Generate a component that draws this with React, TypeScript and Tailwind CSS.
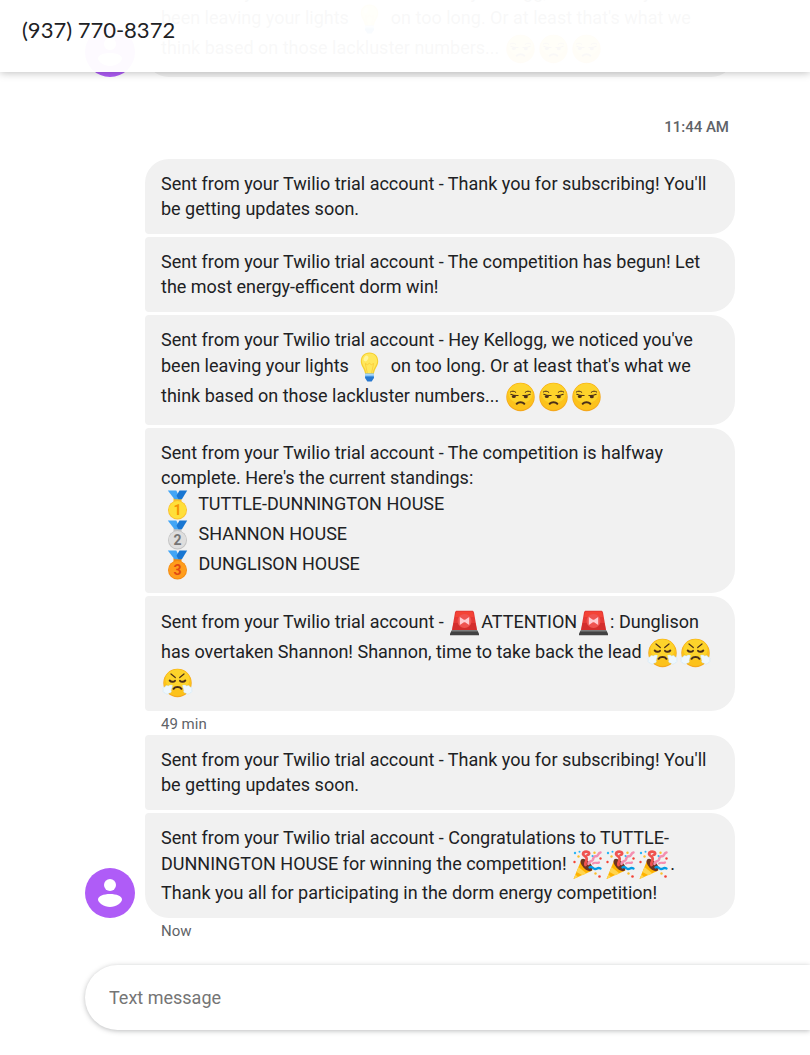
import type { ReactNode } from "react";
import clsx from "clsx";

const Emoji = ({ label, children }: { label: string; children: ReactNode }) => (
  <svg
    role="img"
    aria-label={label}
    viewBox="0 0 30 30"
    className="inline-block h-[30px] w-[33px] align-middle"
  >
    {children}
  </svg>
);

const Bulb = () => (
  <Emoji label="light bulb">
    <path d="M15 .5C9.500.5 6.300 4.400 6.300 9.200c0 4.800 3.600 7.200 4.300 12.500h8.800c.7-5.300 4.300-7.700 4.300-12.500C23.700 4.400 20.500.5 15 .5z" fill="#f6cf2f" />
    <path d="M15 1.500c-4.900 0-7.600 3.400-7.600 7.600 0 4.400 3.700 6.700 4.400 12h6.400c.7-5.300 4.400-7.600 4.400-12 0-4.200-2.700-7.600-7.600-7.600z" fill="#ffe75c" />
    <path d="M12.800 21l-2-9.500 2.100 1.200 2-1.400 2 1.400 2.200-1.200-2 9.500" fill="none" stroke="#f9c937" strokeWidth=".8" />
    <ellipse cx="11.500" cy="6.500" rx="2" ry="3" transform="rotate(30 11.500 6.500)" fill="#fff59d" />
    <path d="M10.600 21.500h8.800v4.200l-1.400 1.600h-6l-1.400-1.600z" fill="#64b5f6" />
    <path d="M10.600 24.500h8.800v1.500l-2.200 3.500h-4.400L10.600 26z" fill="#2878d0" />
    <path d="M10.600 22.800h8.800" stroke="#bbdefb" strokeWidth="1.300" />
  </Emoji>
);

const FaceBase = () => (
  <>
    <circle cx="15" cy="15" r="14.200" fill="#f5a81c" />
    <circle cx="15" cy="14.500" r="13.600" fill="#fcc21b" />
    <ellipse cx="15" cy="11.500" rx="12" ry="10" fill="#fdd32b" />
  </>
);

const Unamused = () => (
  <Emoji label="unamused face">
    <FaceBase />
    <g fill="none" stroke="#4a2e18" strokeLinecap="round">
      <path d="M4.800 10c1.800-1.300 3.800-1.100 5.500.3M19.700 10.300c1.700-1.400 3.700-1.600 5.500-.3" strokeWidth="1" />
      <path d="M5.300 12.300c2.200 1 4.600 1.400 7.300 1.200M17.400 13.500c2.700.2 5.100-.2 7.300-1.200" strokeWidth="1.100" />
      <path d="M11.200 21.800c1.900-2 5.700-2 7.600 0" strokeWidth="2" />
    </g>
    <ellipse cx="8.300" cy="14.500" rx="2" ry="1.600" fill="#4a2e18" />
    <ellipse cx="20.300" cy="14.700" rx="2" ry="1.600" fill="#4a2e18" />
  </Emoji>
);

const Triumph = () => (
  <Emoji label="face with steam from nose">
    <FaceBase />
    <g fill="none" stroke="#4a2e18" strokeLinecap="round">
      <path d="M8.500 6l4.300 3.500M21.500 6l-4.300 3.500" strokeWidth="1.200" />
      <path d="M7.200 12.500c1.500 1.700 4 1.700 5.300.3M22.800 12.500c-1.500 1.700-4 1.700-5.300.3" strokeWidth="1.900" />
      <path d="M11 20.800c1.800-2.300 6.200-2.300 8 0" strokeWidth="2" />
    </g>
    <g fill="#eef7fd" stroke="#c3e0f2" strokeWidth=".4">
      <path d="M10 17.500c-1.700-.8-3.400-.4-4 .6-1.500-1.300-3.300-.6-3.500.8-2 .1-2.500 2-1.600 3-1 1.300 0 3.100 1.700 3 .8 1.700 3.500 1.500 4.100.1 1.700.3 2.800-1.400 1.900-2.700.7-1.400.8-2.900 1.400-4.800z" />
      <path d="M20 17.500c1.700-.8 3.400-.4 4 .6 1.500-1.300 3.300-.6 3.500.8 2 .1 2.500 2 1.600 3 1 1.300 0 3.100-1.700 3-.8 1.700-3.500 1.500-4.100.1-1.700.3-2.800-1.400-1.900-2.700-.7-1.400-.8-2.900-1.400-4.800z" />
    </g>
  </Emoji>
);

type MedalProps = { label: string; place: string; rim: string; fill: string; ink: string };

const Medal = ({ label, place, rim, fill, ink }: MedalProps) => (
  <Emoji label={label}>
    <path d="M11 8h8v5h-8z" fill={rim} />
    <path d="M5.300.5h8.500l4.200 8.700h-6z" fill="#42a5f5" />
    <path d="M17 .5h7.700l-5.300 8.700h-3.400l-2-3.500z" fill="#1976d2" />
    <circle cx="15" cy="20" r="9.500" fill={rim} />
    <circle cx="15" cy="19.800" r="8.700" fill={fill} />
    <text
      x="15"
      y="25"
      textAnchor="middle"
      fill={ink}
      className="font-[Roboto,sans-serif] text-[14px] font-bold"
    >
      {place}
    </text>
  </Emoji>
);

const Siren = () => (
  <Emoji label="police car light">
    <path d="M5.500 4.500C5.700 3.300 6.500 2.800 7.500 2.800h15c1 0 1.800.5 2 1.700L27.500 22h-25z" fill="#e53935" />
    <path d="M6.500 5c.1-1 .6-1.300 1.300-1.300h14.400c.7 0 1.200.3 1.300 1.300l.8 4H5.800z" fill="#f44336" />
    <path d="M4 15l-1.500 7h25L26 15z" fill="#c62828" opacity=".6" />
    <circle cx="15" cy="13" r="7" fill="#ef5350" />
    <path d="M10.300 9l4.100 2.700h1.200L19.700 9v8l-4.100-2.700h-1.200L10.300 17z" fill="#ffcdd2" />
    <path d="M2.300 22.500h25.400l1.800 3V27.200H.5v-1.700z" fill="#424242" />
    <path d="M2.300 22.500h25.400l1 1.600H1.300z" fill="#616161" />
  </Emoji>
);

const Party = () => (
  <Emoji label="party popper">
    <path d="M9 9.500L1 29l19-8.500z" fill="#ffb300" />
    <path d="M6 17l-2 5 6 3.300 4-1.900zM3 24.500L1 29l4.500-2z" fill="#ffd54f" />
    <ellipse cx="14" cy="15" rx="7.600" ry="4" transform="rotate(46 14 15)" fill="#6d3420" />
    <g fill="none" strokeLinecap="round">
      <path d="M13 15c-1-3 2-4 1-7-.8-2.300-3-2-3.500-4 0-2 3-3 5-2 2 .9 1 3-.5 3" stroke="#ef5350" strokeWidth="2.700" />
      <path d="M16 14c0-3.500 4-2 4.500-4.500.4-2.500 1-3.600 3-3.300 2.500.4 1.700-3.400 4.500-3.700" stroke="#f48fb1" strokeWidth="2.500" />
      <path d="M17 17.500c2-2 3.500 1.200 5.500 1.500 2.500.2 2.300-2.200 5.500-.5" stroke="#039be5" strokeWidth="2.400" />
      <path d="M20.500 13.500c2-2 4 .5 6-1" stroke="#f48fb1" strokeWidth="2.200" />
    </g>
    <g fill="#fbc02d">
      <circle cx="6" cy="6.500" r="1.200" />
      <circle cx="22" cy="2.700" r="1.200" />
      <circle cx="23" cy="23.500" r="1.200" />
    </g>
    <g fill="#29b6f6">
      <circle cx="2.500" cy="3" r="1.200" />
      <circle cx="7" cy="1.800" r="1" />
      <circle cx="20" cy="6" r="1" />
    </g>
    <g fill="#f44336">
      <circle cx="2" cy="12" r="1.200" />
      <circle cx="28" cy="8.500" r="1.200" />
      <circle cx="27" cy="26.500" r="1.300" />
    </g>
  </Emoji>
);

const Avatar = () => (
  <svg viewBox="0 0 50 50" aria-hidden="true" className="block h-[50px] w-[50px]">
    <circle cx="25" cy="25" r="25" fill="#af5cf7" />
    <circle cx="25" cy="17" r="6" fill="#fff" />
    <path d="M13 31.500c0-3.300 5.500-5.500 12-5.500s12 2.200 12 5.500S31 39 25 39s-12-4.200-12-7.500z" fill="#fff" />
  </svg>
);

type BubbleProps = { first?: boolean; last?: boolean; children: ReactNode };

const Bubble = ({ first, last, children }: BubbleProps) => (
  <div
    className={clsx(
      "rounded-r-3xl bg-[#f1f1f1] pt-3 pr-[14px] pb-[13px] pl-4",
      first ? "rounded-tl-3xl" : "rounded-tl-sm",
      last ? "rounded-bl-3xl" : "rounded-bl-sm"
    )}
  >
    {children}
  </div>
);

const MessageGroup = ({ avatar, children }: { avatar?: boolean; children: ReactNode }) => (
  <div className="flex items-end gap-[10px]">
    <div className="w-[50px] shrink-0">{avatar && <Avatar />}</div>
    <div className="flex flex-1 flex-col gap-[3px]">{children}</div>
  </div>
);

const Status = ({ children }: { children: ReactNode }) => (
  <p className="ml-[76px] pt-[3px] text-[15px] leading-[21px] text-[#5f6368]">{children}</p>
);

const prefix = "Sent from your Twilio trial account - ";

const LightsMessage = () => (
  <>
    {`${prefix}Hey Kellogg, we noticed you've been leaving your lights `}
    <Bulb /> on too long. Or at least that's what we think based on those lackluster numbers...{" "}
    <Unamused />
    <Unamused />
    <Unamused />
  </>
);

const standings = [
  { name: "TUTTLE-DUNNINGTON HOUSE", label: "1st place", place: "1", rim: "#fbc02d", fill: "#ffdf3a", ink: "#f59300" },
  { name: "SHANNON HOUSE", label: "2nd place", place: "2", rim: "#c2c2c2", fill: "#dedede", ink: "#757575" },
  { name: "DUNGLISON HOUSE", label: "3rd place", place: "3", rim: "#f48b10", fill: "#ff9d1c", ink: "#e04a12" },
];

const App = () => {
  return (
    <div className="relative min-h-screen overflow-hidden bg-white font-[Roboto,sans-serif] text-lg leading-[25px] text-[#202124]">
      <header className="absolute inset-x-0 top-0 z-10 bg-white/97 px-[22px] pt-4 pb-7 shadow-[0_1px_8px_rgba(0,0,0,0.25)]">
        <h1 className="font-[Lato,sans-serif] text-[22px] leading-7">(937) 770-8372</h1>
      </header>

      <main className="-mt-[33px] pr-[75px] pl-[85px]">
        <MessageGroup avatar>
          <Bubble last>
            <LightsMessage />
          </Bubble>
        </MessageGroup>

        <p className="mt-[38px] mb-[19px] pr-[6px] text-right text-[15px] font-medium text-[#5f6368]">
          11:44 AM
        </p>

        <MessageGroup>
          <Bubble first>{`${prefix}Thank you for subscribing! You'll be getting updates soon.`}</Bubble>
          <Bubble>{`${prefix}The competition has begun! Let the most energy-efficent dorm win!`}</Bubble>
          <Bubble>
            <LightsMessage />
          </Bubble>
          <Bubble>
            {`${prefix}The competition is halfway complete. Here's the current standings:`}
            {standings.map(({ name, ...medal }) => (
              <div key={name}>
                <Medal {...medal} /> {name}
              </div>
            ))}
          </Bubble>
          <Bubble>
            {prefix}
            <Siren />
            ATTENTION
            <Siren />: Dunglison has overtaken Shannon! Shannon, time to take back the lead{" "}
            <Triumph />
            <Triumph />
            <Triumph />
          </Bubble>
        </MessageGroup>
        <Status>49 min</Status>

        <MessageGroup avatar>
          <Bubble>{`${prefix}Thank you for subscribing! You'll be getting updates soon.`}</Bubble>
          <Bubble last>
            {`${prefix}Congratulations to TUTTLE-DUNNINGTON HOUSE for winning the competition! `}
            <Party />
            <Party />
            <Party />. Thank you all for participating in the dorm energy competition!
          </Bubble>
        </MessageGroup>
        <Status>Now</Status>
      </main>

      <form className="mt-[23px] mb-6 pl-[85px]" onSubmit={(e) => e.preventDefault()}>
        <input
          type="text"
          aria-label="Text message"
          placeholder="Text message"
          className="block h-[65px] w-full rounded-l-full bg-white px-6 shadow-[0_1px_5px_rgba(60,64,67,0.35)] outline-none placeholder:text-[#757575]"
        />
      </form>
    </div>
  );
};

export default App;
